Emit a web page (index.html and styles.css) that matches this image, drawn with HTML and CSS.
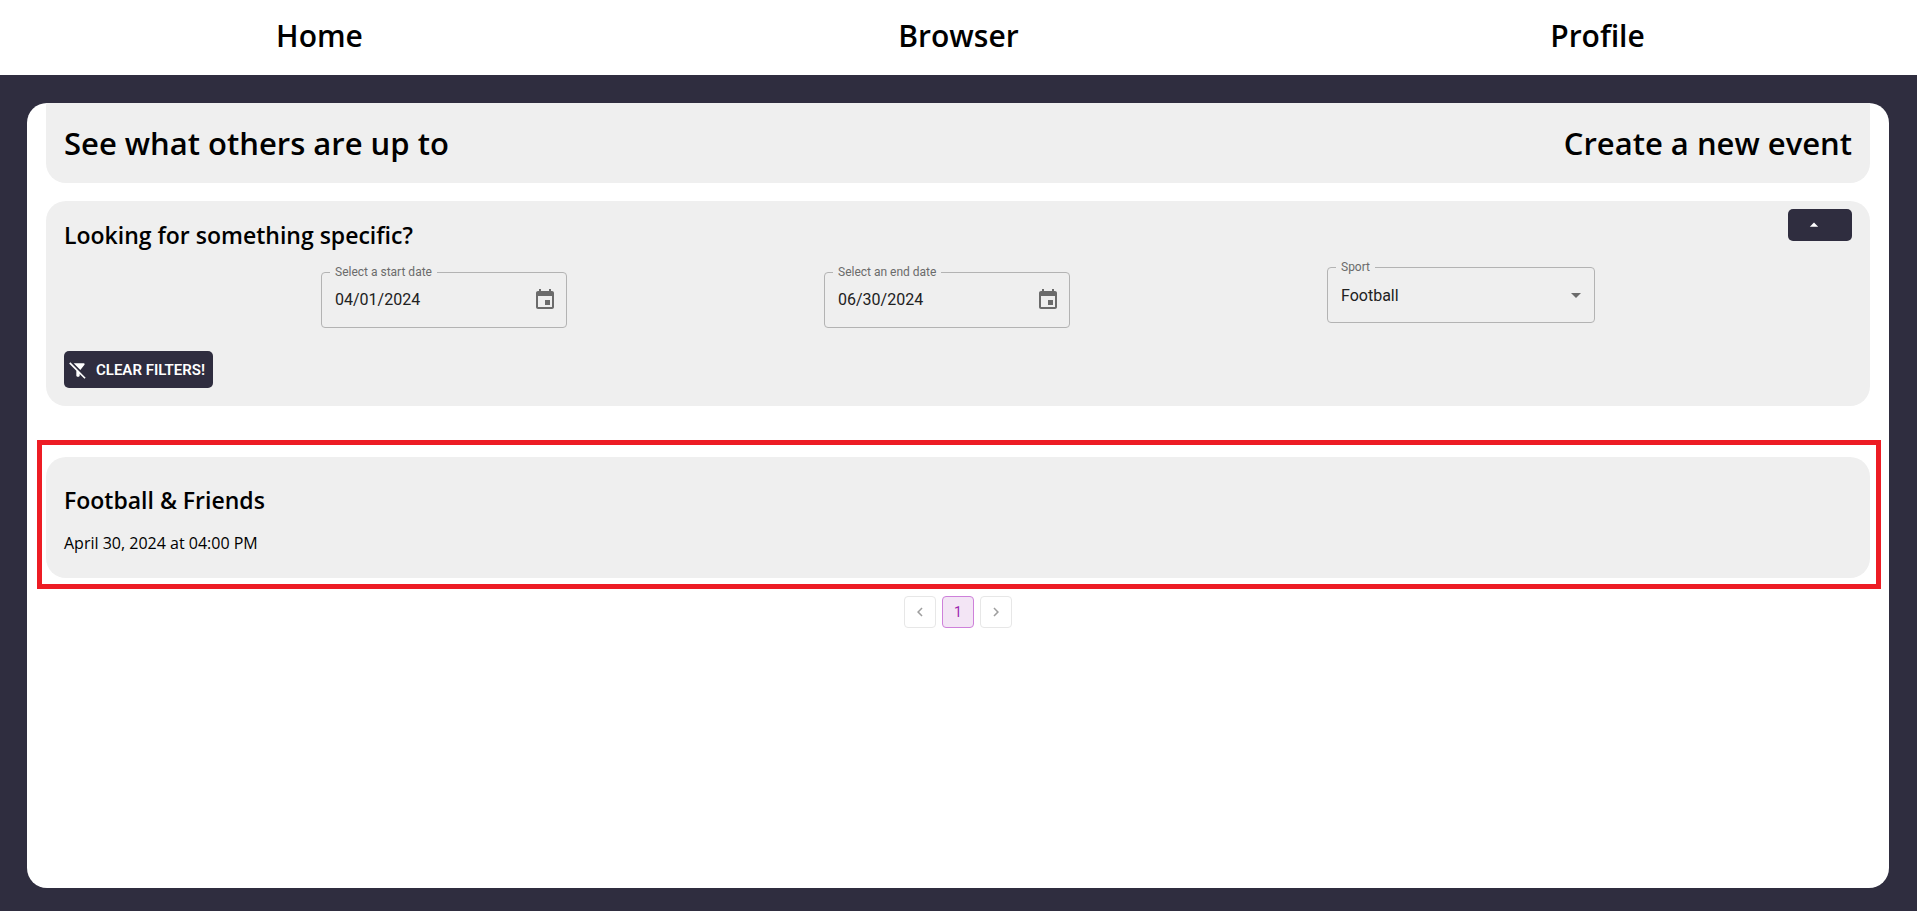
FILE: index.html
```html
<!DOCTYPE html>
<html lang="en">
<head>
<meta charset="utf-8">
<meta name="viewport" content="width=device-width, initial-scale=1">
<title>Browser</title>
<link rel="stylesheet" href="styles.css">
</head>
<body>
<nav class="navbar">
  <a class="nav-link" href="#home">Home</a>
  <a class="nav-link" href="#browser">Browser</a>
  <a class="nav-link" href="#profile">Profile</a>
</nav>
<main class="panel">
  <header class="card title-card">
    <h1 class="title">See what others are up to</h1>
    <a class="title" href="#new">Create a new event</a>
  </header>
  <section class="card filter-card">
    <div class="filter-head">
      <h2 class="subtitle">Looking for something specific?</h2>
      <button class="toggle" type="button" aria-label="Collapse filters">
        <svg width="20" height="20" viewBox="0 0 24 24" fill="currentColor"><path d="m7 14 5-5 5 5z"/></svg>
      </button>
    </div>
    <div class="fields">
      <div class="field date-field">
        <label class="field-label" for="start">Select a start date</label>
        <input class="field-input" id="start" type="text" value="04/01/2024">
        <button class="icon-button" type="button" aria-label="Choose start date">
          <svg width="24" height="24" viewBox="0 0 24 24" fill="currentColor"><path d="M17 12h-5v5h5v-5zM16 1v2H8V1H6v2H5c-1.11 0-1.99.9-1.99 2L3 19c0 1.1.89 2 2 2h14c1.1 0 2-.9 2-2V5c0-1.1-.9-2-2-2h-1V1h-2zm3 18H5V8h14v11z"/></svg>
        </button>
      </div>
      <div class="field date-field">
        <label class="field-label" for="end">Select an end date</label>
        <input class="field-input" id="end" type="text" value="06/30/2024">
        <button class="icon-button" type="button" aria-label="Choose end date">
          <svg width="24" height="24" viewBox="0 0 24 24" fill="currentColor"><path d="M17 12h-5v5h5v-5zM16 1v2H8V1H6v2H5c-1.11 0-1.99.9-1.99 2L3 19c0 1.1.89 2 2 2h14c1.1 0 2-.9 2-2V5c0-1.1-.9-2-2-2h-1V1h-2zm3 18H5V8h14v11z"/></svg>
        </button>
      </div>
      <div class="field sport-field">
        <label class="field-label" for="sport">Sport</label>
        <select class="field-input" id="sport"><option>Football</option></select>
        <svg class="caret" width="24" height="24" viewBox="0 0 24 24" fill="currentColor"><path d="M7 10l5 5 5-5z"/></svg>
      </div>
    </div>
    <button class="clear" type="button">
      <svg width="20" height="20" viewBox="0 0 24 24" fill="currentColor"><path d="M19.79 5.61C20.3 4.95 19.83 4 19 4H6.83l7.97 7.97 4.99-6.36zM2.81 2.81 1.39 4.22 10 13v6c0 .55.45 1 1 1h2c.55 0 1-.45 1-1v-2.17l5.78 5.78 1.41-1.41L2.81 2.81z"/></svg>
      <span>Clear filters!</span>
    </button>
  </section>
  <section class="highlight">
    <article class="card event-card">
      <h2 class="subtitle">Football &amp; Friends</h2>
      <p class="event-date">April 30, 2024 at 04:00 PM</p>
    </article>
  </section>
  <nav class="pagination" aria-label="Pages">
    <button class="page" type="button" aria-label="Previous page" disabled>
      <svg width="18" height="18" viewBox="0 0 24 24" fill="currentColor"><path d="M15.41 7.41L14 6l-6 6 6 6 1.41-1.41L10.83 12z"/></svg>
    </button>
    <button class="page page-current" type="button" aria-current="page">1</button>
    <button class="page" type="button" aria-label="Next page" disabled>
      <svg width="18" height="18" viewBox="0 0 24 24" fill="currentColor"><path d="M10 6L8.59 7.41 13.17 12l-4.58 4.59L10 18l6-6z"/></svg>
    </button>
  </nav>
</main>
</body>
</html>
```
FILE: styles.css
```css
* { box-sizing: border-box; }

body {
  margin: 0;
  min-height: 100vh;
  display: flex;
  flex-direction: column;
  background: #2f2d3f;
  color: #000;
  font-family: "Trebuchet MS", "Open Sans", sans-serif;
}

svg { display: block; flex: none; }
button { cursor: pointer; font-family: Roboto, sans-serif; }

.navbar {
  display: grid;
  grid-template-columns: repeat(3, 1fr);
  justify-items: center;
  padding: 16px 0 19px;
  background: #fff;
}

.nav-link {
  color: inherit;
  font-size: 30px;
  font-weight: 600;
  line-height: 40px;
  text-decoration: none;
}

.panel {
  flex: 1;
  margin: 28px 28px 23px 27px;
  padding: 0 19px;
  border-radius: 20px;
  background: #fff;
}

.card {
  padding: 18px;
  border-radius: 20px;
  background: #efefef;
}

.title-card {
  display: flex;
  justify-content: space-between;
  padding: 20px 18px;
  border-radius: 0 0 20px 20px;
}

.title {
  margin: 0;
  color: inherit;
  font-size: 31px;
  font-weight: 600;
  line-height: 40px;
  text-decoration: none;
}

.filter-card {
  margin-top: 18px;
  padding-top: 8px;
}

.filter-head {
  display: flex;
  justify-content: space-between;
  align-items: flex-start;
}

.subtitle {
  margin: 0;
  font-size: 23px;
  font-weight: 600;
  line-height: 32px;
}

.filter-head .subtitle { margin-top: 10px; }

.toggle {
  display: flex;
  align-items: center;
  width: 64px;
  height: 32px;
  padding: 0 16px;
  border: 0;
  border-radius: 5px;
  background: #2f2d3f;
  color: #fff;
}

.fields {
  display: flex;
  justify-content: space-evenly;
  align-items: flex-start;
  margin-top: 16px;
}

.field {
  position: relative;
  display: flex;
  align-items: center;
  height: 56px;
  border: 1px solid #b3b3b3;
  border-radius: 4px;
  color: #6b6b6b;
}

.date-field {
  width: 246px;
  margin-top: 5px;
  padding-right: 9px;
}

.date-field .field-input { padding-bottom: 2px; }

.sport-field { width: 268px; }

.sport-field .field-input { padding-top: 2px; }

.field-label {
  position: absolute;
  top: -8px;
  left: 8px;
  padding: 0 5px;
  background: #efefef;
  font: 12px/14px Roboto, sans-serif;
}

.field-input {
  flex: 1;
  min-width: 0;
  height: 100%;
  padding: 0 13px;
  border: 0;
  outline: 0;
  background: none;
  color: #212121;
  font: 16px/24px Roboto, sans-serif;
  appearance: none;
}

.icon-button {
  padding: 0;
  border: 0;
  background: none;
  color: #6b6b6b;
}

.caret {
  position: absolute;
  right: 6px;
  pointer-events: none;
}

.clear {
  display: flex;
  align-items: center;
  gap: 8px;
  height: 37px;
  margin-top: 23px;
  padding: 0 8px 0 4px;
  border: 0;
  border-radius: 5px;
  background: #2f2d3f;
  color: #fff;
  font-size: 15px;
  font-weight: 600;
  text-transform: uppercase;
}

.highlight {
  margin: 34px -11px 7px -9px;
  padding: 12px 6px 6px 4px;
  border: 5px solid #ed1c24;
}

.event-card { padding: 27px 18px 23px; }

.event-date {
  margin: 15px 0 0;
  font-size: 16px;
  line-height: 24px;
}

.pagination {
  display: flex;
  justify-content: center;
  gap: 6px;
}

.page {
  display: flex;
  align-items: center;
  justify-content: center;
  width: 32px;
  height: 32px;
  padding: 0;
  border: 1px solid #e7e7e7;
  border-radius: 4px;
  background: #fff;
  color: #9e9e9e;
  font-size: 14px;
}

.page-current {
  border-color: #ce80da;
  background: #f3e5f5;
  color: #9c27b0;
}
```
